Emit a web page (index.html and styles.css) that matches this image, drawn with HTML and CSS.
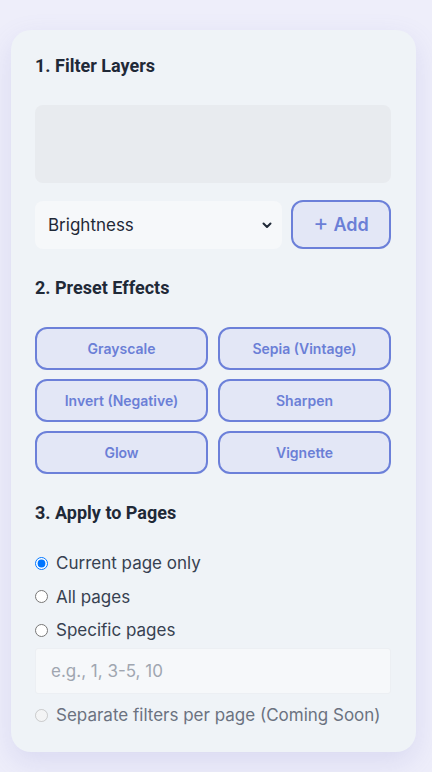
FILE: index.html
```html
<!DOCTYPE html>
<html lang="en">
<head>
<meta charset="utf-8">
<title>Filters</title>
<link rel="stylesheet" href="styles.css">
</head>
<body>
<div class="card">
  <section class="section">
    <h3 class="heading">1. Filter Layers</h3>
    <div class="layer-list"></div>
    <div class="add-row">
      <div class="select">
        <span>Brightness</span>
        <svg class="chevron" width="10" height="7" viewBox="0 0 10 7"><path d="M1.5 1.5 L5 5 L8.5 1.5" fill="none" stroke="#1f2937" stroke-width="2" stroke-linecap="round" stroke-linejoin="round"/></svg>
      </div>
      <button class="add-btn"><span class="plus">+</span> Add</button>
    </div>
  </section>
  <section class="section">
    <h3 class="heading">2. Preset Effects</h3>
    <div class="presets">
      <button class="preset">Grayscale</button>
      <button class="preset">Sepia (Vintage)</button>
      <button class="preset">Invert (Negative)</button>
      <button class="preset">Sharpen</button>
      <button class="preset">Glow</button>
      <button class="preset">Vignette</button>
    </div>
  </section>
  <section class="section last">
    <h3 class="heading">3. Apply to Pages</h3>
    <div class="options">
      <label class="option"><input type="radio" name="pages" checked> Current page only</label>
      <label class="option"><input type="radio" name="pages"> All pages</label>
      <label class="option"><input type="radio" name="pages"> Specific pages</label>
      <input class="pages-input" type="text" placeholder="e.g., 1, 3-5, 10">
      <label class="option disabled"><input type="radio" name="pages" disabled> Separate filters per page (Coming Soon)</label>
    </div>
  </section>
</div>
</body>
</html>
```
FILE: styles.css
```css
html, body {
  margin: 0;
  padding: 0;
}
body {
  background: #eeeefa;
  font-family: Inter, "Noto Sans", sans-serif;
  min-height: 772px;
  padding: 30px 16px 20px 11px;
  box-sizing: border-box;
}
.card {
  width: 405px;
  box-sizing: border-box;
  background: #eff3f7;
  border-radius: 20px;
  padding: 24px 25px 25px 24px;
  box-shadow: 0 10px 28px rgba(110, 110, 200, 0.16);
}
.section {
  margin-bottom: 27px;
}
.section.last {
  margin-bottom: 0;
}
.heading {
  font-family: Roboto, "Liberation Sans", sans-serif;
  font-weight: 700;
  font-size: 18px;
  line-height: 24px;
  color: #1f2937;
  margin: 0 0 27px 0;
}
.layer-list {
  height: 78px;
  background: #e8ebef;
  border-radius: 8px;
  margin-bottom: 18px;
}
.add-row {
  display: flex;
  gap: 9px;
  height: 48px;
}
.select {
  flex: 1;
  display: flex;
  align-items: center;
  justify-content: space-between;
  background: #f6f8fa;
  border-radius: 8px;
  padding: 0 10px 0 13px;
  font-size: 17px;
  color: #1f2937;
}
.chevron {
  display: block;
}
.add-btn {
  width: 100px;
  box-sizing: border-box;
  border: 2px solid #6c80d9;
  background: #e3e7f6;
  border-radius: 12px;
  color: #6b7fd6;
  font-family: Inter, sans-serif;
  font-weight: 600;
  font-size: 18px;
  padding: 0;
  margin-top: -1px;
  display: flex;
  align-items: center;
  justify-content: center;
  gap: 0;
}
.plus {
  font-size: 23px;
  font-weight: 400;
  line-height: 1;
  margin-right: 5px;
  margin-top: -3px;
}
.presets {
  display: grid;
  grid-template-columns: 1fr 1fr;
  column-gap: 10px;
  row-gap: 9px;
}
.preset {
  height: 43px;
  box-sizing: border-box;
  border: 2px solid #6c80d9;
  background: #e3e7f6;
  border-radius: 12px;
  color: #6b7fd6;
  font-family: Inter, sans-serif;
  font-weight: 600;
  font-size: 14px;
  padding: 0;
}
.options {
  display: flex;
  flex-direction: column;
  gap: 9.5px;
  margin-top: -1px;
}
.option {
  display: flex;
  align-items: center;
  gap: 8px;
  font-size: 17px;
  line-height: 24px;
  color: #374151;
}
.option input {
  margin: 0;
  width: 13px;
  height: 13px;
}
.option.disabled {
  color: #6b7280;
}
.pages-input {
  height: 46px;
  box-sizing: border-box;
  border: 1px solid #eceff3;
  background: #f6f8fa;
  border-radius: 3px;
  padding: 0 15px;
  font-family: Inter, sans-serif;
  font-size: 17px;
  color: #374151;
  margin: -4px 0 0 0;
  outline: none;
}
.pages-input::placeholder {
  color: #a0a6b0;
}
```
